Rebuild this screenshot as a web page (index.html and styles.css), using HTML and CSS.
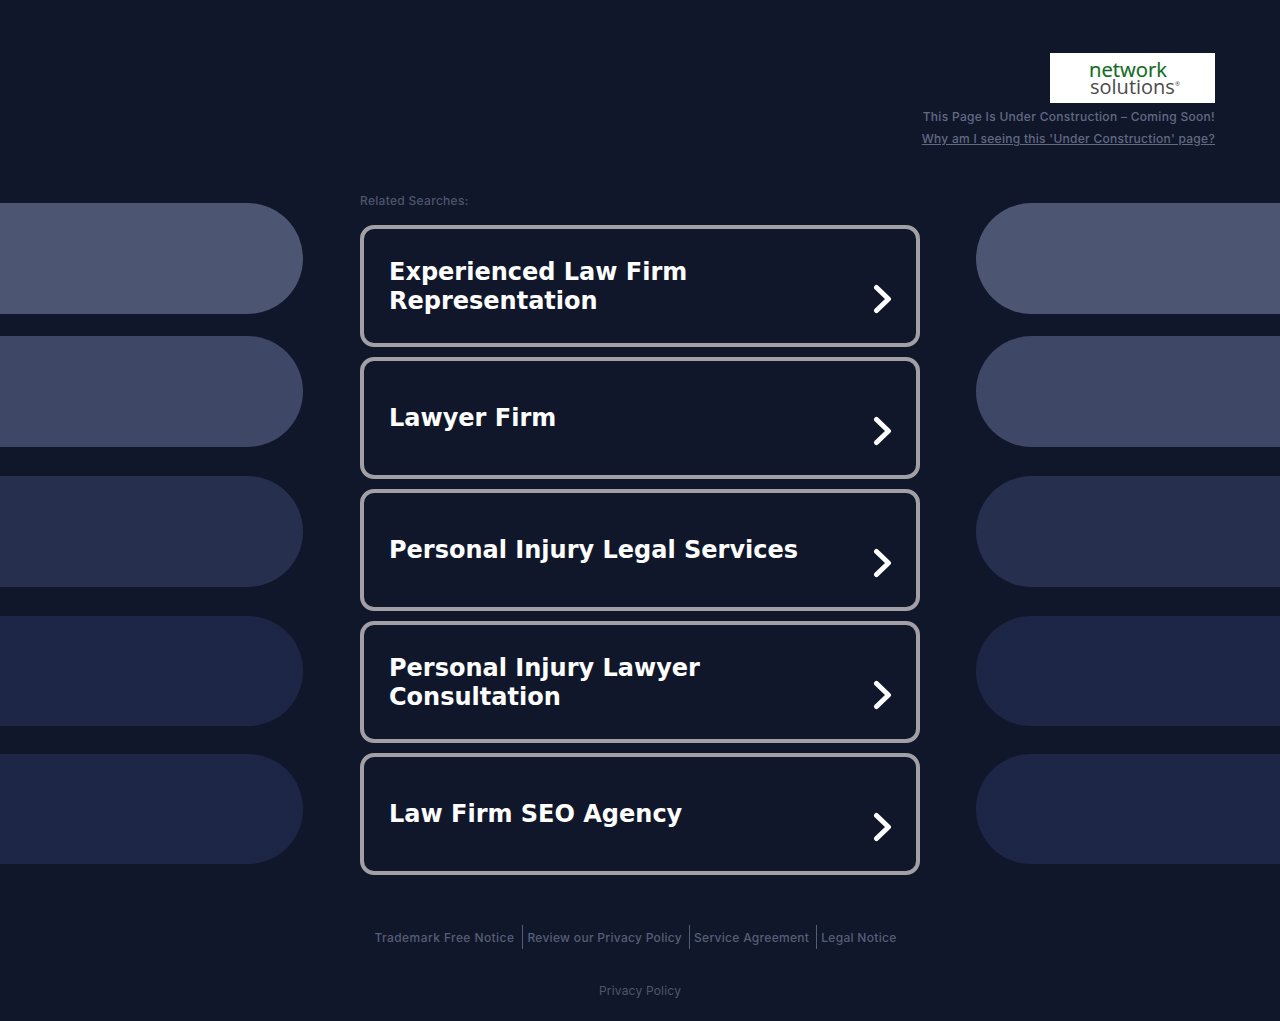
FILE: index.html
```html
<!DOCTYPE html>
<html lang="en">
<head>
<meta charset="utf-8">
<title>Under Construction</title>
<link rel="stylesheet" href="styles.css">
</head>
<body>
<div class="decor decor-left">
  <div class="pill p1"></div><div class="pill p2"></div><div class="pill p3"></div><div class="pill p4"></div><div class="pill p5"></div>
</div>
<div class="decor decor-right">
  <div class="pill p1"></div><div class="pill p2"></div><div class="pill p3"></div><div class="pill p4"></div><div class="pill p5"></div>
</div>
<header class="top">
  <div class="logo">
    <div class="logo-text"><span class="logo-network">network</span><span class="logo-solutions">solutions<span class="logo-reg">®</span></span></div>
  </div>
  <p class="notice">This Page Is Under Construction – Coming Soon!</p>
  <a class="why" href="#">Why am I seeing this 'Under Construction' page?</a>
</header>
<main class="content">
  <p class="related">Related Searches:</p>
  <a class="card" href="#"><span class="card-title">Experienced Law Firm Representation</span><svg class="chev" viewBox="0 0 20 30"><path d="M3.5 3.5 L15.5 15 L3.5 26.5"/></svg></a>
  <a class="card" href="#"><span class="card-title">Lawyer Firm</span><svg class="chev" viewBox="0 0 20 30"><path d="M3.5 3.5 L15.5 15 L3.5 26.5"/></svg></a>
  <a class="card" href="#"><span class="card-title">Personal Injury Legal Services</span><svg class="chev" viewBox="0 0 20 30"><path d="M3.5 3.5 L15.5 15 L3.5 26.5"/></svg></a>
  <a class="card" href="#"><span class="card-title">Personal Injury Lawyer Consultation</span><svg class="chev" viewBox="0 0 20 30"><path d="M3.5 3.5 L15.5 15 L3.5 26.5"/></svg></a>
  <a class="card" href="#"><span class="card-title">Law Firm SEO Agency</span><svg class="chev" viewBox="0 0 20 30"><path d="M3.5 3.5 L15.5 15 L3.5 26.5"/></svg></a>
</main>
<footer class="foot">
  <nav class="foot-links">
    <a class="foot-link" href="#">Trademark Free Notice</a>
    <a class="foot-link" href="#">Review our Privacy Policy</a>
    <a class="foot-link" href="#">Service Agreement</a>
    <a class="foot-link" href="#">Legal Notice</a>
  </nav>
  <a class="privacy" href="#">Privacy Policy</a>
</footer>
</body>
</html>
```
FILE: styles.css
```css
* { box-sizing: border-box; }
html, body { margin: 0; padding: 0; }
body {
  position: relative;
  height: 1021px;
  overflow: hidden;
  background: #11172b;
  font-family: "DejaVu Sans", sans-serif;
  color: #fff;
}
a { text-decoration: none; }

.decor { position: absolute; top: 203px; width: 303px; display: flex; flex-direction: column; }
.decor-left { left: 0; }
.decor-right { right: 0; width: 304px; }
.pill { width: 100%; height: 111px; }
.decor-left .pill { border-radius: 0 56px 56px 0; }
.decor-right .pill { border-radius: 56px 0 0 56px; }
.p1 { background: #4c5673; }
.p2 { background: #3e4765; margin-top: 22px; }
.p3 { background: #272f4e; margin-top: 29px; }
.p4, .p5 {
  background-color: #1b2444;
  background-image: repeating-conic-gradient(rgba(255, 255, 255, 0.015) 0 25%, transparent 0 50%);
  background-size: 2px 2px;
  height: 110px;
}
.p4 { margin-top: 29px; }
.p5 { margin-top: 28px; }

.top { display: flex; flex-direction: column; align-items: flex-end; padding: 53px 65px 0 0; }
.logo { width: 165px; height: 50px; padding: 5px 0 0 39px; background: #fff; display: flex; align-items: center; }
.logo-text { display: flex; flex-direction: column; font-family: "Open Sans", sans-serif; line-height: 17px; }
.logo-network { color: #0f6b22; font-size: 20.3px; -webkit-text-stroke: 0.2px #0f6b22; }
.logo-solutions { color: #4a4a4a; font-size: 20px; font-weight: 400; margin-left: 1px; }
.logo-reg { font-size: 6px; position: relative; top: -8px; }
.notice, .why, .related { font-family: Inter, sans-serif; font-weight: 500; font-size: 12px; line-height: 16px; letter-spacing: 0.3px; }
.notice { margin: 6px 0 0; color: #616a83; }
.why { margin-top: 6px; color: #616a83; text-decoration: underline; letter-spacing: 0.28px; }

.content { width: 560px; margin: 46px auto 0; display: flex; flex-direction: column; }
.related { margin: 0 0 16px; color: #4d556c; }
.card {
  height: 122px;
  margin-bottom: 10px;
  border: 4px solid #a0a0a5;
  border-radius: 14px;
  background: #11172b;
  display: flex;
  align-items: center;
  justify-content: space-between;
  padding: 0 25px;
}
.card-title { display: block; width: 440px; font-size: 24px; font-weight: 700; line-height: 29px; color: #fff; position: relative; top: 0.5px; }
.chev { width: 20px; height: 30px; margin: 26px -2px 0 0; flex: none; }
.chev path { fill: none; stroke: #fff; stroke-width: 5px; stroke-linecap: round; stroke-linejoin: round; }

.foot { display: flex; flex-direction: column; align-items: center; }
.foot-links { display: flex; height: 24px; margin-top: 40px; margin-left: -5px; }
.foot-link { display: flex; align-items: center; padding: 0 7px 0 4px; font-family: Inter, sans-serif; font-weight: 500; font-size: 12px; letter-spacing: 0.3px; color: #565e77; border-left: 1px solid #565e77; }
.foot-link:first-child { border-left: 0; padding: 0 8px 0 3px; letter-spacing: 0.42px; }
.privacy { margin-top: 34px; font-family: Inter, sans-serif; font-size: 12px; line-height: 16px; letter-spacing: 0.2px; color: #4f566c; }
```
